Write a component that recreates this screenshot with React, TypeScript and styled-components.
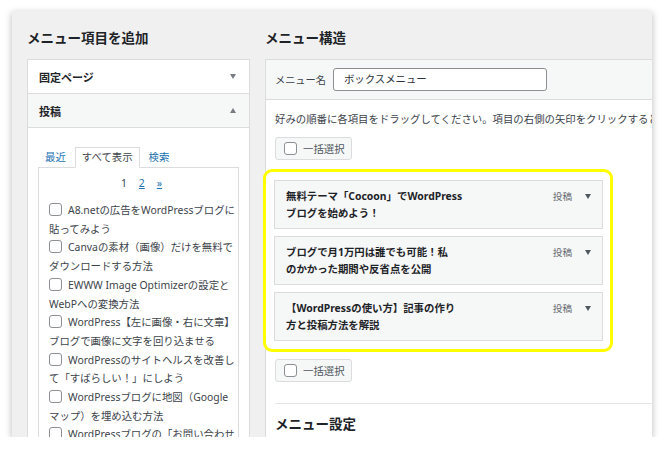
import React from 'react';
import styled, { createGlobalStyle } from 'styled-components';

const GlobalStyle = createGlobalStyle`
  html, body {
    margin: 0;
    padding: 0;
    background: #ffffff;
  }
  body {
    font-family: "Noto Sans", "Noto Sans CJK JP", sans-serif;
    color: #3c434a;
  }
`;

const leftPosts: string[][] = [
  ['A8.netの広告をWordPressブログに', '貼ってみよう'],
  ['Canvaの素材（画像）だけを無料で', 'ダウンロードする方法'],
  ['EWWW Image Optimizerの設定と', 'WebPへの変換方法'],
  ['WordPress【左に画像・右に文章】', 'ブログで画像に文字を回り込ませる'],
  ['WordPressのサイトヘルスを改善し', 'て「すばらしい！」にしよう'],
  ['WordPressブログに地図（Google', 'マップ）を埋め込む方法'],
  ['WordPressブログの「お問い合わせ', 'フォーム」の作り方'],
];

const menuItems: string[][] = [
  ['無料テーマ「Cocoon」でWordPress', 'ブログを始めよう！'],
  ['ブログで月1万円は誰でも可能！私', 'のかかった期間や反省点を公開'],
  ['【WordPressの使い方】記事の作り', '方と投稿方法を解説'],
];

const App: React.FC = () => {
  return (
    <>
      <GlobalStyle />
      <Frame>
        <LeftColumn>
          <Heading>メニュー項目を追加</Heading>
          <AccordionBox>
            <AccordionRow>
              <AccordionTitle>固定ページ</AccordionTitle>
              <Triangle />
            </AccordionRow>
            <AccordionRow $open>
              <AccordionTitle>投稿</AccordionTitle>
              <Triangle $up />
            </AccordionRow>
            <AccordionBody>
              <Tabs>
                <TabLink>最近</TabLink>
                <ActiveTab>すべて表示</ActiveTab>
                <TabLink $after>検索</TabLink>
              </Tabs>
              <TabPanel>
                <Pager>
                  <PageCurrent>1</PageCurrent>
                  <PageLink>2</PageLink>
                  <PageLink>»</PageLink>
                </Pager>
                <PostList>
                  {leftPosts.map((lines) => (
                    <PostItem key={lines[0]}>
                      <Checkbox />
                      {lines[0]}
                      <br />
                      {lines[1]}
                    </PostItem>
                  ))}
                </PostList>
              </TabPanel>
            </AccordionBody>
          </AccordionBox>
        </LeftColumn>

        <RightColumn>
          <Heading>メニュー構造</Heading>
          <MenuBox>
            <MenuHeader>
              <NameLabel>メニュー名</NameLabel>
              <NameInput>ボックスメニュー</NameInput>
            </MenuHeader>
            <MenuBody>
              <Instructions>
                好みの順番に各項目をドラッグしてください。項目の右側の矢印をクリックすると
              </Instructions>
              <BulkButton>
                <Checkbox />
                一括選択
              </BulkButton>
              <Highlight>
                {menuItems.map((lines) => (
                  <MenuItem key={lines[0]}>
                    <ItemTitle>
                      {lines[0]}
                      <br />
                      {lines[1]}
                    </ItemTitle>
                    <ItemType>投稿</ItemType>
                    <ItemArrow />
                  </MenuItem>
                ))}
              </Highlight>
              <BulkButton>
                <Checkbox />
                一括選択
              </BulkButton>
              <Divider />
              <SubHeading>メニュー設定</SubHeading>
            </MenuBody>
          </MenuBox>
        </RightColumn>
      </Frame>
    </>
  );
};

const Frame = styled.div`
  width: 640px;
  height: 426px;
  margin: 11px 0 0 12px;
  background: #f0f0f1;
  box-shadow: 0 2px 7px rgba(0, 0, 0, 0.28);
  overflow: hidden;
  display: flex;
  gap: 15px;
  padding-left: 15px;
  box-sizing: border-box;
`;

const LeftColumn = styled.div`
  flex: 0 0 223px;
  min-width: 0;
  display: flex;
  flex-direction: column;
`;

const RightColumn = styled.div`
  flex: 0 0 400px;
  min-width: 0;
  display: flex;
  flex-direction: column;
`;

const Heading = styled.h2`
  margin: 17px 0 11px;
  font-size: 13.5px;
  line-height: 20px;
  font-weight: 700;
  color: #1d2327;
`;

const AccordionBox = styled.div`
  flex: 1;
  min-width: 0;
  background: #ffffff;
  border: 1px solid #dcdcde;
  border-bottom: none;
  overflow: hidden;
`;

const AccordionRow = styled.div<{ $open?: boolean }>`
  height: 33px;
  display: flex;
  align-items: center;
  justify-content: space-between;
  padding: 0 13px 0 11px;
  border-bottom: 1px solid #dcdcde;
  background: ${(p) => (p.$open ? '#f6f7f7' : '#ffffff')};
`;

const AccordionTitle = styled.span`
  font-size: 11px;
  font-weight: 700;
  color: #1d2327;
`;

const Triangle = styled.span<{ $up?: boolean }>`
  width: 0;
  height: 0;
  border-left: 3.5px solid transparent;
  border-right: 3.5px solid transparent;
  ${(p) =>
    p.$up
      ? 'border-bottom: 5px solid #787c82;'
      : 'border-top: 5px solid #787c82;'}
`;

const AccordionBody = styled.div`
  padding: 19px 10px 0;
`;

const Tabs = styled.div`
  display: flex;
  align-items: flex-end;
  padding-left: 7px;
  height: 20px;
`;

const TabLink = styled.span<{ $after?: boolean }>`
  font-size: 10.4px;
  line-height: 19px;
  color: #2271b1;
  padding: ${(p) => (p.$after ? '0 0 0 9px' : '0 9px 0 0')};
`;

const ActiveTab = styled.span`
  font-size: 10.4px;
  line-height: 19px;
  color: #3c434a;
  background: #ffffff;
  border: 1px solid #dcdcde;
  border-bottom: 1px solid #ffffff;
  padding: 0 6px;
  margin-bottom: -1px;
  position: relative;
  z-index: 1;
`;

const TabPanel = styled.div`
  border: 1px solid #dcdcde;
  padding: 6px 10px 0;
  overflow: hidden;
`;

const Pager = styled.div`
  display: flex;
  justify-content: center;
  gap: 12px;
  font-size: 10.4px;
  line-height: 18px;
  margin-bottom: 9px;
  padding-left: 6px;
`;

const PageCurrent = styled.span`
  color: #3c434a;
`;

const PageLink = styled.span`
  color: #2271b1;
  text-decoration: underline;
`;

const PostList = styled.div`
  display: flex;
  flex-direction: column;
`;

const PostItem = styled.div`
  font-size: 10.4px;
  line-height: 18.7px;
  color: #3c434a;
  white-space: nowrap;
`;

const Checkbox = styled.span`
  display: inline-block;
  width: 13px;
  height: 13px;
  box-sizing: border-box;
  border: 1px solid #8c8f94;
  border-radius: 3px;
  background: #ffffff;
  vertical-align: -2px;
  margin-right: 6px;
`;

const MenuBox = styled.div`
  flex: 1;
  background: #ffffff;
  border: 1px solid #dcdcde;
  border-right: none;
  border-bottom: none;
`;

const MenuHeader = styled.div`
  height: 39px;
  display: flex;
  align-items: center;
  gap: 7px;
  padding-left: 9px;
  background: #f6f7f7;
  border-bottom: 1px solid #dcdcde;
`;

const NameLabel = styled.span`
  font-size: 10.2px;
  color: #3c434a;
`;

const NameInput = styled.div`
  width: 214px;
  height: 23px;
  box-sizing: border-box;
  border: 1px solid #8c8f94;
  border-radius: 3px;
  background: #ffffff;
  font-size: 10.4px;
  line-height: 21px;
  padding-left: 10px;
  color: #2c3338;
`;

const MenuBody = styled.div`
  padding: 10px 0 0 9px;
  display: flex;
  flex-direction: column;
  align-items: flex-start;
`;

const Instructions = styled.p`
  margin: 0 0 8px;
  font-size: 10.4px;
  line-height: 19px;
  white-space: nowrap;
  color: #3c434a;
`;

const BulkButton = styled.div`
  width: 77px;
  height: 23px;
  box-sizing: border-box;
  display: flex;
  align-items: center;
  padding-left: 8px;
  background: #f6f7f7;
  border: 1px solid #dcdcde;
  border-radius: 3px;
  font-size: 10.4px;
  color: #50575e;
`;

const Highlight = styled.div`
  margin: 9px 0 7px -12px;
  width: 350px;
  box-sizing: border-box;
  border: 3px solid #ffff00;
  border-radius: 9px;
  padding: 8px 7px 8px 8px;
  display: flex;
  flex-direction: column;
  gap: 7px;
`;

const MenuItem = styled.div`
  height: 49px;
  box-sizing: border-box;
  display: flex;
  align-items: flex-start;
  padding: 7px 11px 0 11px;
  background: #f6f7f7;
  border: 1px solid #dcdcde;
`;

const ItemTitle = styled.div`
  flex: 1;
  font-size: 10.4px;
  line-height: 17px;
  font-weight: 700;
  color: #1d2327;
  white-space: nowrap;
`;

const ItemType = styled.span`
  font-size: 9.6px;
  line-height: 17px;
  color: #646970;
  margin-right: 13px;
`;

const ItemArrow = styled.span`
  margin-top: 6px;
  width: 0;
  height: 0;
  border-left: 3.5px solid transparent;
  border-right: 3.5px solid transparent;
  border-top: 5px solid #50575e;
`;

const Divider = styled.div`
  align-self: stretch;
  margin-top: 21px;
  border-top: 1px solid #e6e6e6;
`;

const SubHeading = styled.h3`
  margin: 10px 0 0;
  font-size: 13.5px;
  line-height: 20px;
  font-weight: 700;
  color: #1d2327;
`;

export default App;
